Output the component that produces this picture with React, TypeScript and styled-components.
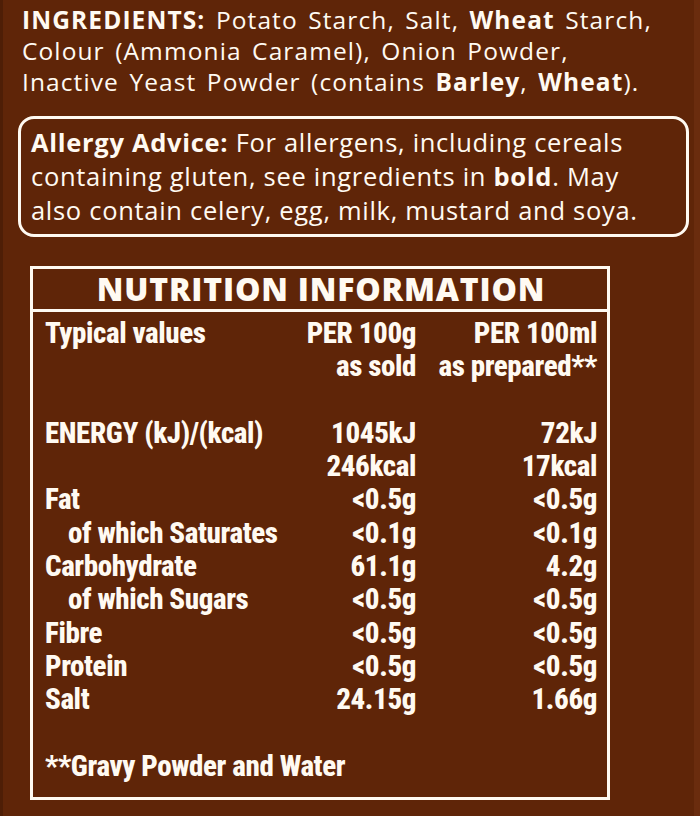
import React from "react";
import styled, { createGlobalStyle } from "styled-components";

const Global = createGlobalStyle`
  html, body { margin: 0; padding: 0; background: #5f2508; }
  #root { width: 700px; height: 816px; }
`;

const Label = styled.div`
  width: 700px;
  height: 816px;
  box-sizing: border-box;
  background: #5f2508;
  color: #fffaf2;
  border-left: 3px solid #4e1e06;
  border-right: 6px solid #6a2c0e;
  padding: 4px 8px 0 19px;
  display: flex;
  flex-direction: column;
  overflow: hidden;
`;

const Ingredients = styled.p`
  margin: 0;
  font-family: "Open Sans", "Liberation Sans", sans-serif;
  font-size: 24.5px;
  line-height: 31px;
  letter-spacing: 1.1px;
  word-spacing: 3px;
  white-space: nowrap;
`;

const B = styled.b`
  font-weight: 700;
`;

const AllergyBox = styled.div`
  margin: 19px 0 0 -4px;
  width: 671px;
  box-sizing: border-box;
  border: 3px solid #fffaf2;
  border-radius: 16px;
  padding: 6px 10px 7px 10px;
  font-family: "Open Sans", "Liberation Sans", sans-serif;
  font-size: 25.5px;
  line-height: 34px;
  letter-spacing: 0.7px;
  white-space: nowrap;
`;

const Nutrition = styled.section`
  margin: 29px 0 0 8px;
  width: 580px;
  height: 534px;
  box-sizing: border-box;
  border: 3px solid #fffaf2;
  display: flex;
  flex-direction: column;
`;

const Title = styled.h2`
  margin: 0;
  height: 40px;
  border-bottom: 3px solid #fffaf2;
  display: flex;
  align-items: center;
  justify-content: center;
  font-family: "Open Sans", "Liberation Sans", sans-serif;
  font-weight: 800;
  font-size: 32px;
  line-height: 40px;
  letter-spacing: 0.8px;
  padding-left: 2px;
`;

const Table = styled.div`
  display: grid;
  grid-template-columns: 251px 120px 181px;
  grid-auto-rows: 33.3px;
  padding: 5px 10px 0 12px;
  font-family: Roboto, "Open Sans", sans-serif;
  font-stretch: 75%;
  font-weight: 800;
  font-size: 29px;
  line-height: 33.3px;
  align-items: center;
  white-space: nowrap;
`;

const Cell = styled.div<{ $right?: boolean; $indent?: boolean }>`
  text-align: ${(p) => (p.$right ? "right" : "left")};
  padding-left: ${(p) => (p.$indent ? "23px" : "0")};
  letter-spacing: -0.4px;
`;

const Footnote = styled.div`
  grid-column: 1 / -1;
  letter-spacing: -0.4px;
`;

const rows: [string, string, string, boolean?][] = [
  ["ENERGY (kJ)/(kcal)", "1045kJ", "72kJ"],
  ["", "246kcal", "17kcal"],
  ["Fat", "<0.5g", "<0.5g"],
  ["of which Saturates", "<0.1g", "<0.1g", true],
  ["Carbohydrate", "61.1g", "4.2g"],
  ["of which Sugars", "<0.5g", "<0.5g", true],
  ["Fibre", "<0.5g", "<0.5g"],
  ["Protein", "<0.5g", "<0.5g"],
  ["Salt", "24.15g", "1.66g"],
];

export default function App() {
  return (
    <>
      <Global />
      <Label>
        <Ingredients>
          <B>INGREDIENTS:</B> Potato Starch, Salt, <B>Wheat</B> Starch,
          <br />
          Colour (Ammonia Caramel), Onion Powder,
          <br />
          Inactive Yeast Powder (contains <B>Barley</B>, <B>Wheat</B>).
        </Ingredients>
        <AllergyBox>
          <B>Allergy Advice:</B> For allergens, including cereals
          <br />
          containing gluten, see ingredients in <B>bold</B>. May
          <br />
          also contain celery, egg, milk, mustard and soya.
        </AllergyBox>
        <Nutrition>
          <Title>NUTRITION INFORMATION</Title>
          <Table>
            <Cell>Typical values</Cell>
            <Cell $right>PER 100g</Cell>
            <Cell $right>PER 100ml</Cell>
            <Cell />
            <Cell $right>as sold</Cell>
            <Cell $right>as prepared**</Cell>
            <Cell />
            <Cell />
            <Cell />
            {rows.map(([l, a, b, ind], i) => (
              <React.Fragment key={i}>
                <Cell $indent={ind}>{l}</Cell>
                <Cell $right>{a}</Cell>
                <Cell $right>{b}</Cell>
              </React.Fragment>
            ))}
            <Footnote />
            <Footnote>**Gravy Powder and Water</Footnote>
          </Table>
        </Nutrition>
      </Label>
    </>
  );
}
